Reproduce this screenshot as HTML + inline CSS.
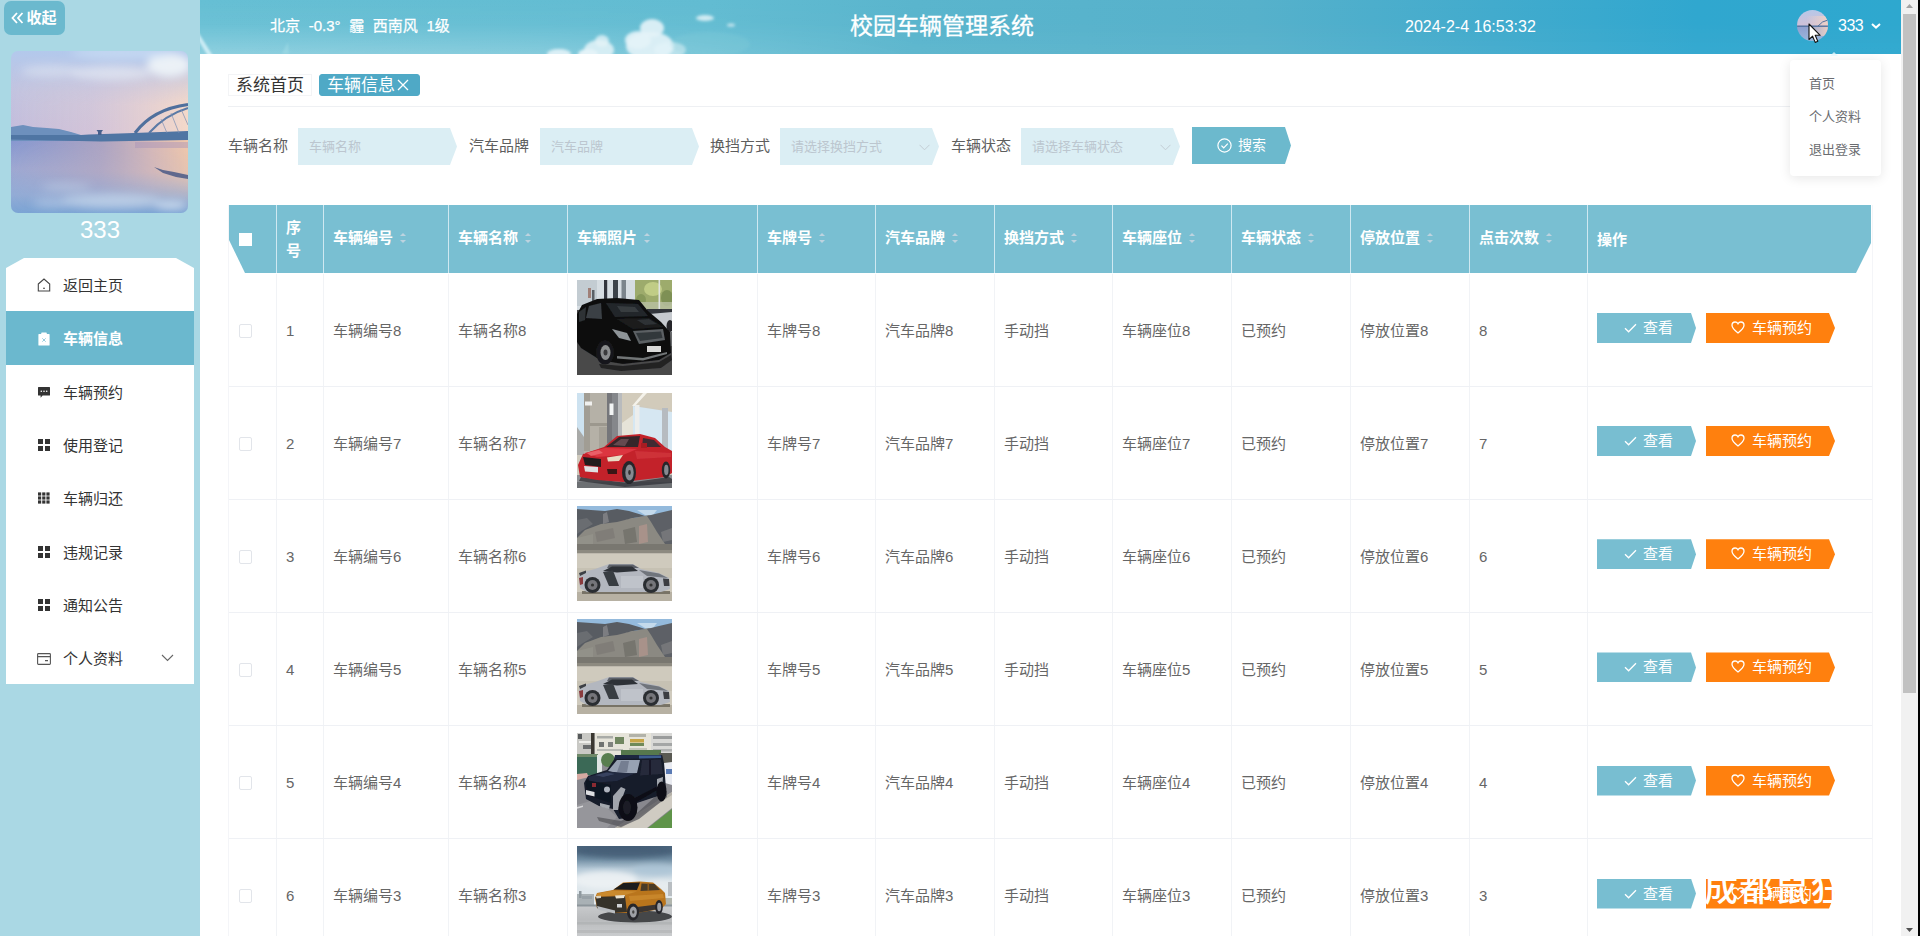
<!DOCTYPE html>
<html lang="zh-CN">
<head>
<meta charset="utf-8">
<title>校园车辆管理系统</title>
<style>
*{box-sizing:border-box;margin:0;padding:0}
html,body{width:1920px;height:936px;overflow:hidden;background:#fff;font-family:"Liberation Sans","Noto Sans CJK SC",sans-serif;color:#606266;font-size:14px}
body{position:relative}
#side{position:absolute;left:0;top:0;width:200px;height:936px;background:#aad8e4}
#collapse{position:absolute;left:4px;top:1px;width:61px;height:34px;border-radius:7px;background:#6bb9ce;color:#fff;font-size:15px;font-weight:bold;line-height:33px;padding-left:7px;white-space:nowrap}
#collapse svg{vertical-align:-1px;margin-right:2.5px}
#avatar{position:absolute;left:11px;top:51px;width:177px;height:162px;border-radius:7px;overflow:hidden}
#uname{position:absolute;left:0;top:214px;width:200px;text-align:center;color:#fff;font-size:24px;line-height:32px}
#menu{position:absolute;left:6px;top:258px;width:188px;height:426px;background:#fff;clip-path:polygon(18px 0,170px 0,188px 10px,188px 100%,0 100%,0 10px)}
#menu .it{position:relative;height:53.33px;line-height:55.5px;padding-left:57px;font-size:15px;color:#333}
#menu .it.on{background:#6bb8ce;color:#fff;font-weight:bold}
#menu .it svg{position:absolute;left:31.5px;top:21px}
#menu .it .arr{position:absolute;left:154.5px;top:22.5px}
#head{position:absolute;left:200px;top:0;width:1701px;height:54px;background:#5ab5cd;overflow:hidden;color:#fff}
#weather{position:absolute;left:70px;top:0;line-height:52px;font-size:15px;white-space:pre;word-spacing:4.5px;-webkit-text-stroke:.25px #fff}
#title{position:absolute;left:650px;top:0;line-height:53px;font-size:23px;white-space:nowrap;-webkit-text-stroke:.3px #fff}
#clock{position:absolute;left:1205px;top:0;line-height:53.5px;font-size:16px;white-space:nowrap}
#user{position:absolute;left:1638px;top:0;line-height:51.5px;font-size:16px;letter-spacing:-0.5px;white-space:nowrap}
#uav{position:absolute;left:1597px;top:10px;width:31px;height:31px;border-radius:50%;overflow:hidden}
#drop{position:absolute;left:1790px;top:60px;width:91px;height:116px;background:#fff;border-radius:4px;box-shadow:0 2px 12px rgba(0,0,0,.1);font-size:13px;color:#6a6c70}
#drop div{position:absolute;left:19px;line-height:20px;white-space:nowrap}
#tabs{position:absolute;left:228px;top:74px;height:22px;white-space:nowrap;font-size:17px;color:#333}
.tab{position:absolute;top:0;height:22px;line-height:22.5px;border:1px solid #f3f4f6;padding:0 7px;white-space:nowrap}
.tab.on{background:#4fa9c6;color:#fff;border-color:#4fa9c6;border-radius:3px}
#hr{position:absolute;left:228px;top:106px;width:1644px;height:1px;background:#eef0f3}
.lab{position:absolute;top:128px;line-height:36.5px;font-size:15px;color:#5e5e5e;white-space:nowrap}
.inp{position:absolute;top:128px;width:159px;height:37px;background:#dbeef4;clip-path:polygon(0 0,152px 0,159px 50%,152px 100%,0 100%);font-size:13px;color:#bcc6cf;line-height:37px;padding-left:11px;white-space:nowrap}
#sbtn{position:absolute;left:1192px;top:127px;width:99px;height:37px;background:#6cb9cd;clip-path:polygon(0 0,93px 0,99px 50%,93px 100%,0 100%);color:#fff;font-size:14px;line-height:36px;padding-left:46px}
#sbtn svg{position:absolute;left:25px;top:11px}
#tbl{position:absolute;left:228px;top:205px;width:1645px;height:731px;font-size:15px;border-left:1px solid #f4f5f8;border-right:1px solid #f4f5f8}
#th{position:absolute;left:0;top:0;width:1642px;height:68px;background:#79bfd2;clip-path:polygon(0 0,100% 0,100% 38px,1627px 100%,16px 100%,0 35px);color:#fff;font-weight:bold}
.hc{position:absolute;top:0;height:68px;line-height:66px;padding-left:9px;border-right:1px solid #cfe8f1;white-space:nowrap}
.hc.nb{border-right:0}
.hc.two{line-height:23px;padding-top:11px}
.hcb{position:absolute;left:10px;top:28px;width:13px;height:13px;background:#fff}
.srt{display:inline-block;position:relative;width:10px;height:20px;vertical-align:middle;margin-left:5px;top:-1px}
.srt:before,.srt:after{content:"";position:absolute;left:2px;border:3px solid transparent}
.srt:before{top:2px;border-bottom-color:#bdd3df}
.srt:after{top:12px;border-top-color:#bdd3df}
.tr{position:absolute;left:0;width:1643px;height:113.12px;border-bottom:1px solid #eff1f5}
.td{position:absolute;top:0;height:100%;line-height:114px;padding-left:9px;border-right:1px solid #f1f3f6;white-space:nowrap;color:#666}
.tr .td:last-child{border-right:0}
.cb{position:absolute;left:10px;top:50px;width:13px;height:14px;border:1px solid #e2e5ea;border-radius:2px;background:#fff}
.pic{position:absolute;left:9px;top:6.6px;width:95px;height:95px;overflow:hidden;background:#777}
.b1,.b2{position:absolute;top:39.5px;height:30px;line-height:29px;color:#fff;font-size:15px;white-space:nowrap}
.b1{left:9px;width:99px;background:#78bed1;clip-path:polygon(0 0,94px 0,99px 50%,94px 100%,0 100%);padding-left:46px}
.b2{left:118px;width:129px;background:#ff800e;clip-path:polygon(0 0,123px 0,129px 50%,123px 100%,0 100%);padding-left:46px}
.b1 svg{position:absolute;left:27px;top:10px}
.b2 svg{position:absolute;left:25px;top:8px}
#wm{position:absolute;left:1704px;top:867px;width:136px;overflow:hidden;font-size:34px;font-weight:500;line-height:44px;color:#fff;white-space:nowrap;letter-spacing:1.5px}
#blk{position:absolute;left:1918px;top:0;width:2px;height:936px;background:#000}
#sb{position:absolute;left:1901px;top:0;width:17px;height:936px;background:#f1f1f1}
#sb i{position:absolute;left:2px;top:14px;width:13px;height:679px;background:#c1c1c1}
</style>
</head>
<body>
<div id="side">
  <div id="collapse"><svg width="13" height="12" viewBox="0 0 13 12" fill="none" stroke="#fff" stroke-width="1.8"><path d="M6 1 L1.5 6 L6 11 M11.5 1 L7 6 L11.5 11"/></svg>收起</div>
  <div id="avatar"><!--AVATAR--><svg width="177" height="162" viewBox="0 0 177 162" preserveAspectRatio="none">
<defs>
<linearGradient id="a_avs" x1="0" y1="0" x2="0" y2="1"><stop offset="0" stop-color="#b3c9ec"/><stop offset=".45" stop-color="#c3c4e0"/><stop offset="1" stop-color="#c4bbdc"/></linearGradient>
<linearGradient id="a_avr" x1="0" y1="0" x2="1" y2="0"><stop offset="0" stop-color="#f4d6c6" stop-opacity="0"/><stop offset=".45" stop-color="#ecd0d2" stop-opacity=".35"/><stop offset="1" stop-color="#f6dac8" stop-opacity=".95"/></linearGradient>
<linearGradient id="a_avw" x1="0" y1="0" x2="0" y2="1"><stop offset="0" stop-color="#8597d0"/><stop offset=".4" stop-color="#9ea8d2"/><stop offset=".75" stop-color="#93acd6"/><stop offset="1" stop-color="#7ba4d4"/></linearGradient>
<linearGradient id="a_avwr" x1="0" y1="0" x2="1" y2="0"><stop offset="0" stop-color="#b8a8c0" stop-opacity="0"/><stop offset=".5" stop-color="#bba8bc" stop-opacity=".7"/><stop offset=".8" stop-color="#e0bcb4" stop-opacity=".9"/><stop offset="1" stop-color="#f2c8aa" stop-opacity="1"/></linearGradient>
<linearGradient id="a_avfade" x1="0" y1="0" x2="0" y2="1"><stop offset="0" stop-color="#fff" stop-opacity="1"/><stop offset=".45" stop-color="#fff" stop-opacity=".85"/><stop offset=".85" stop-color="#fff" stop-opacity=".12"/><stop offset="1" stop-color="#fff" stop-opacity="0"/></linearGradient>
<mask id="a_avm"><rect x="0" y="88" width="177" height="74" fill="url(#a_avfade)"/></mask>
<linearGradient id="a_avfade2" x1="0" y1="0" x2="0" y2="1"><stop offset="0" stop-color="#fff" stop-opacity="0"/><stop offset=".1" stop-color="#fff" stop-opacity="0"/><stop offset=".6" stop-color="#fff" stop-opacity="1"/><stop offset="1" stop-color="#fff" stop-opacity="1"/></linearGradient>
<mask id="a_avm2"><rect x="0" y="0" width="177" height="90" fill="url(#a_avfade2)"/></mask>
<filter id="a_avb" x="-20%" y="-20%" width="140%" height="140%"><feGaussianBlur stdDeviation="4"/></filter>
<filter id="a_avb2" x="-20%" y="-20%" width="140%" height="140%"><feGaussianBlur stdDeviation="0.6"/></filter>
</defs>
<rect width="177" height="90" fill="url(#a_avs)"/>
<rect y="0" width="177" height="90" fill="url(#a_avr)" mask="url(#a_avm2)"/>
<g filter="url(#a_avb)" fill="#eef3f8"><ellipse cx="158" cy="14" rx="22" ry="12" opacity=".95"/><ellipse cx="100" cy="22" rx="40" ry="7" opacity=".55"/><ellipse cx="40" cy="20" rx="30" ry="6" opacity=".4"/><ellipse cx="110" cy="2" rx="50" ry="6" fill="#c8dcf4" opacity=".8"/></g>
<rect y="88" width="177" height="74" fill="url(#a_avw)"/>
<rect y="88" width="177" height="74" fill="url(#a_avwr)" mask="url(#a_avm)"/>
<g filter="url(#a_avb)" fill="#d4e2f2"><ellipse cx="100" cy="150" rx="50" ry="7" opacity=".6"/><ellipse cx="160" cy="154" rx="16" ry="4" opacity=".9"/><ellipse cx="55" cy="136" rx="25" ry="4" opacity=".35"/><ellipse cx="40" cy="152" rx="18" ry="4" opacity=".4"/></g>
<g filter="url(#a_avb2)">
<path d="M0 76 L12 74 L22 76 L36 77 L48 78 L60 81 L70 84 L70 90 L0 90 Z" fill="#6d90bd"/>
<path d="M0 84 L70 84 L78 83.5 L123 82 L177 80 L177 89 L90 90.5 L0 88.5 Z" fill="#4f74a3"/>
<path d="M85.5 79 H92 L90.5 81 V84 H87 V81 Z" fill="#46618d"/>
<path d="M124 82 Q142 58 177 53.5" fill="none" stroke="#4f6f9d" stroke-width="3.2"/>
<path d="M138 82 Q154 64 177 57" fill="none" stroke="#5b7aa6" stroke-width="2"/>
<path d="M150 68 L156 82 M160 62 L168 82 M170 58 L177 74" stroke="#7d8fb4" stroke-width=".7" fill="none"/>
<path d="M143 116 L152 119 L163 121 L177 124 L177 128 L165 126 L152 122 Z" fill="#4a5a86" opacity=".85"/>
<rect x="124" y="91" width="53" height="6" fill="#a793b8" opacity=".45"/>
</g>
</svg><!--/AVATAR--></div>
  <div id="uname">333</div>
  <div id="menu">
    <div class="it"><svg width="14" height="14" viewBox="0 0 14 14" fill="none" stroke="#444" stroke-width="1.1" style="left:30.5px;top:20px"><path d="M1.3 6 L7 1 L12.7 6 V13 H1.3 Z"/><path d="M6 10.3 H8"/></svg>返回主页</div>
    <div class="it on"><svg width="12" height="14" viewBox="0 0 12 14" style="left:31.5px;top:20.5px"><path fill="#fff" d="M1 2 H3.2 V1.2 Q3.2 0.5 3.9 0.5 H8.1 Q8.8 0.5 8.8 1.2 V2 H11 Q11.6 2 11.6 2.6 V13 Q11.6 13.6 11 13.6 H1 Q0.4 13.6 0.4 13 V2.6 Q0.4 2 1 2 Z"/><path d="M4.3 6.3 L7.7 9.7 M7.7 6.3 L4.3 9.7" stroke="#8cc6d7" stroke-width="0.9" fill="none"/></svg>车辆信息</div>
    <div class="it"><svg width="12" height="11" viewBox="0 0 12 11" style="left:31.5px;top:22px"><path fill="#333" d="M0.6 0 H11.4 Q12 0 12 0.6 V8 Q12 8.6 11.4 8.6 H4.6 L2.6 10.8 V8.6 H0.6 Q0 8.6 0 8 V0.6 Q0 0 0.6 0 Z"/><circle cx="3.3" cy="4.2" r="0.8" fill="#fff"/><circle cx="6" cy="4.2" r="0.8" fill="#fff"/><circle cx="8.7" cy="4.2" r="0.8" fill="#fff"/></svg>车辆预约</div>
    <div class="it"><svg width="12" height="12" viewBox="0 0 12 12" fill="#333"><rect x="0" y="0" width="5" height="5"/><rect x="7" y="0" width="5" height="5"/><rect x="0" y="7" width="5" height="5"/><rect x="7" y="7" width="5" height="5"/></svg>使用登记</div>
    <div class="it"><svg width="12" height="12" viewBox="0 0 12 12" fill="#333"><rect x="0" y="0.4" width="3.2" height="3.2"/><rect x="0" y="4.4" width="3.2" height="3.2"/><rect x="0" y="8.4" width="3.2" height="3.2"/><rect x="4.2" y="0.4" width="3.2" height="3.2"/><rect x="4.2" y="4.4" width="3.2" height="3.2"/><rect x="4.2" y="8.4" width="3.2" height="3.2"/><rect x="8.4" y="0.4" width="3.2" height="3.2"/><rect x="8.4" y="4.4" width="3.2" height="3.2"/><rect x="8.4" y="8.4" width="3.2" height="3.2"/></svg>车辆归还</div>
    <div class="it"><svg width="12" height="12" viewBox="0 0 12 12" fill="#333"><rect x="0" y="0" width="5" height="5"/><rect x="7" y="0" width="5" height="5"/><rect x="0" y="7" width="5" height="5"/><rect x="7" y="7" width="5" height="5"/></svg>违规记录</div>
    <div class="it"><svg width="12" height="12" viewBox="0 0 12 12" fill="#333"><rect x="0" y="0" width="5" height="5"/><rect x="7" y="0" width="5" height="5"/><rect x="0" y="7" width="5" height="5"/><rect x="7" y="7" width="5" height="5"/></svg>通知公告</div>
    <div class="it"><svg width="14" height="12" viewBox="0 0 14 12" fill="none" stroke="#555" stroke-width="1.1" style="left:30.5px;top:21.5px"><rect x="0.6" y="0.6" width="12.8" height="10.8" rx="0.8"/><path d="M0.6 3.6 H13.4 M8 7.6 H11"/></svg>个人资料<svg class="arr" width="13" height="8" viewBox="0 0 13 8" fill="none" stroke="#666" stroke-width="1.1"><path d="M1 1 L6.5 6.5 L12 1"/></svg></div>
  </div>
</div>
<div id="head">
<svg id="hbg" width="1701" height="54" viewBox="0 0 1701 54" preserveAspectRatio="none" style="position:absolute;left:0;top:0">
<defs>
<linearGradient id="hg" x1="0" y1="0" x2="1" y2="0"><stop offset="0" stop-color="#66bfd4"/><stop offset=".3" stop-color="#62bcd2"/><stop offset=".42" stop-color="#5ab5cd"/><stop offset=".62" stop-color="#56b1cb"/><stop offset=".76" stop-color="#42abcd"/><stop offset=".88" stop-color="#30a7cf"/><stop offset="1" stop-color="#2ea8cf"/></linearGradient>
<linearGradient id="hv" x1="0" y1="0" x2="0" y2="1"><stop offset="0" stop-color="#fff" stop-opacity="0"/><stop offset=".45" stop-color="#fff" stop-opacity=".04"/><stop offset="1" stop-color="#fff" stop-opacity=".26"/></linearGradient>
<linearGradient id="hvm" x1="0" y1="0" x2="1" y2="0"><stop offset="0" stop-color="#fff" stop-opacity="1"/><stop offset=".2" stop-color="#fff" stop-opacity=".85"/><stop offset=".32" stop-color="#fff" stop-opacity=".4"/><stop offset=".42" stop-color="#fff" stop-opacity=".14"/><stop offset="1" stop-color="#fff" stop-opacity=".12"/></linearGradient>
<mask id="hmask"><rect width="1701" height="54" fill="url(#hvm)"/></mask>
<filter id="hb" x="-10%" y="-30%" width="120%" height="160%"><feGaussianBlur stdDeviation="1.6"/></filter>
<filter id="hb2" x="-10%" y="-30%" width="120%" height="160%"><feGaussianBlur stdDeviation="0.8"/></filter>
</defs>
<rect width="1701" height="54" fill="url(#hg)"/>
<rect width="1701" height="54" fill="url(#hv)" mask="url(#hmask)"/>
<g filter="url(#hb2)"><path d="M-2 32 L13 56 L8 56 L-2 40 Z" fill="#d6f1f8" opacity=".85"/><path d="M82 54 L88 42 L89 54 Z" fill="#a6dde8" opacity=".5"/></g>
<g filter="url(#hb)" fill="#e4f3f8">
<ellipse cx="359" cy="54" rx="12" ry="5" opacity=".9"/>
<ellipse cx="399" cy="50" rx="15" ry="10" opacity=".85"/><ellipse cx="402" cy="41" rx="7" ry="6" opacity=".8"/><ellipse cx="388" cy="54" rx="10" ry="5"/>
<ellipse cx="450" cy="46" rx="24" ry="14" opacity=".9"/><ellipse cx="452" cy="28" rx="12" ry="9" opacity=".9"/><ellipse cx="438" cy="40" rx="13" ry="9" opacity=".9"/><ellipse cx="470" cy="50" rx="16" ry="8" opacity=".6"/>
<ellipse cx="505" cy="18" rx="9" ry="3" opacity=".85"/><ellipse cx="531" cy="25" rx="4" ry="1.6" opacity=".8"/>
</g>
<g filter="url(#hb)"><ellipse cx="510" cy="44" rx="40" ry="12" fill="#8fd0de" opacity=".2"/></g>
</svg>
  <div id="weather">北京 -0.3° 霾 西南风 1级</div>
  <div id="title">校园车辆管理系统</div>
  <div id="clock">2024-2-4 16:53:32</div>
  <div id="uav"><svg width="31" height="31" viewBox="0 0 31 31"><defs><linearGradient id="u1" x1="0" y1="0" x2="0" y2="1"><stop offset="0" stop-color="#b7c8e8"/><stop offset=".5" stop-color="#cfc0d8"/><stop offset=".56" stop-color="#8fa0d0"/><stop offset="1" stop-color="#9ab6dc"/></linearGradient><linearGradient id="u2" x1="0" y1="0" x2="1" y2="0"><stop offset=".3" stop-color="#f2d2c4" stop-opacity="0"/><stop offset="1" stop-color="#f2d2c4" stop-opacity=".9"/></linearGradient></defs><rect width="31" height="31" fill="url(#u1)"/><rect y="6" width="31" height="20" fill="url(#u2)"/><rect y="15.5" width="31" height="1.4" fill="#52719f"/><path d="M21 16 Q25 11 31 10" stroke="#52719f" stroke-width="1" fill="none"/></svg></div>
  <div id="user">333<svg width="10" height="7" viewBox="0 0 10 7" style="position:absolute;left:32.5px;top:22.5px" fill="none" stroke="#fff" stroke-width="2"><path d="M1 1 L5 4.6 L9 1"/></svg></div>
</div>
<div id="tabs"><div class="tab" style="left:0">系统首页</div><div class="tab on" style="left:91px;width:101px">车辆信息<svg width="12" height="12" viewBox="0 0 12 12" style="position:absolute;left:77px;top:4px" stroke="#fff" stroke-width="1.3" fill="none"><path d="M1 1 L11 11 M11 1 L1 11"/></svg></div></div>
<div id="hr"></div>
<div class="lab" style="left:228px">车辆名称</div><div class="inp" style="left:298px">车辆名称</div>
<div class="lab" style="left:469px">汽车品牌</div><div class="inp" style="left:540px">汽车品牌</div>
<div class="lab" style="left:710px">换挡方式</div><div class="inp" style="left:780px">请选择换挡方式<svg width="11" height="7" viewBox="0 0 11 7" style="position:absolute;left:139px;top:16px" fill="none" stroke="#c3cdd4" stroke-width="1"><path d="M0.5 0.8 L5.5 5.8 L10.5 0.8"/></svg></div>
<div class="lab" style="left:951px">车辆状态</div><div class="inp" style="left:1021px">请选择车辆状态<svg width="11" height="7" viewBox="0 0 11 7" style="position:absolute;left:139px;top:16px" fill="none" stroke="#c3cdd4" stroke-width="1"><path d="M0.5 0.8 L5.5 5.8 L10.5 0.8"/></svg></div>
<div id="sbtn"><svg width="15" height="15" viewBox="0 0 15 15" fill="none" stroke="#fff" stroke-width="1.2"><circle cx="7.5" cy="7.5" r="6.6"/><path d="M4.4 7.6 L6.7 9.8 L10.8 5.6"/></svg>搜索</div>
<!--TB0-->
<div id="tbl">
<div id="th">
<div class="hc" style="left:0px;width:48px"><b class="hcb"></b></div>
<div class="hc two" style="left:48px;width:47px">序<br>号</div>
<div class="hc" style="left:95px;width:125px">车辆编号<span class="srt"></span></div>
<div class="hc" style="left:220px;width:119px">车辆名称<span class="srt"></span></div>
<div class="hc" style="left:339px;width:190px">车辆照片<span class="srt"></span></div>
<div class="hc" style="left:529px;width:118px">车牌号<span class="srt"></span></div>
<div class="hc" style="left:647px;width:119px">汽车品牌<span class="srt"></span></div>
<div class="hc" style="left:766px;width:118px">换挡方式<span class="srt"></span></div>
<div class="hc" style="left:884px;width:119px">车辆座位<span class="srt"></span></div>
<div class="hc" style="left:1003px;width:119px">车辆状态<span class="srt"></span></div>
<div class="hc" style="left:1122px;width:119px">停放位置<span class="srt"></span></div>
<div class="hc" style="left:1241px;width:118px">点击次数<span class="srt"></span></div>
<div class="hc nb" style="left:1359px;width:284px;padding-top:2px">操作</div>
</div>
<div class="tr" style="top:68.5px">
<div class="td" style="left:0px;width:48px"><i class="cb"></i></div>
<div class="td" style="left:48px;width:47px">1</div>
<div class="td" style="left:95px;width:125px">车辆编号8</div>
<div class="td" style="left:220px;width:119px">车辆名称8</div>
<div class="td" style="left:339px;width:190px"><div class="pic"><!--CAR1--><svg width="95" height="95" viewBox="0 0 95 95"><defs><filter id="c1_cb" x="-10%" y="-10%" width="120%" height="120%"><feGaussianBlur stdDeviation="0.7"/></filter><filter id="c1_cb3" x="-20%" y="-20%" width="140%" height="140%"><feGaussianBlur stdDeviation="2.5"/></filter></defs>
<rect width="95" height="95" fill="#444446"/>
<g filter="url(#c1_cb)">
<rect width="62" height="30" fill="#d6dde2"/>
<rect x="0" y="0" width="20" height="26" fill="#c3ccd2"/>
<rect x="58" y="0" width="37" height="31" fill="#9dab6c"/>
<ellipse cx="76" cy="9" rx="9" ry="7" fill="#c0cc86"/><ellipse cx="90" cy="18" rx="6" ry="8" fill="#7e9054"/><ellipse cx="64" cy="20" rx="5" ry="6" fill="#86985a"/>
<rect x="57" y="22" width="38" height="8" fill="#b9c0a4" opacity=".8"/>
<rect x="11" y="8" width="3" height="10" fill="#a08078"/>
<rect x="15" y="10" width="2.5" height="12" fill="#5a6066"/>
<rect x="27" y="0" width="3.2" height="21" fill="#30363c"/><rect x="36" y="0" width="5" height="21" fill="#3b4248"/><rect x="44.5" y="0" width="4.5" height="21" fill="#7c858c"/>
<rect x="81.5" y="0" width="1.6" height="36" fill="#dfe3e2"/>
<rect x="70" y="29" width="25" height="6" fill="#30353a"/>
<path d="M72 34 L95 32 L95 54 L86 50 L76 42 Z" fill="#c6cacf"/>
<ellipse cx="93" cy="46" rx="3.5" ry="6" fill="#26282b"/>
<rect y="64" width="95" height="31" fill="#48484a"/>
<rect x="88" y="52" width="7" height="14" fill="#6a6c6e"/>
<path d="M0 34 L5 25 L20 19 L40 18 L62 20 L71 31 L84 42 L93 52 L94 73 L82 80 L46 84 L34 82 L20 78 L4 68 L0 62 Z" fill="#0f1011"/>
<path d="M29 23 L61 24 L71 36 L38 37 Z" fill="#23272b"/>
<path d="M40 26 L58 27 L62 32 L44 32 Z" fill="#3c4247" opacity=".8"/>
<path d="M12 26 L24 23 L25 39 L9 38 Z" fill="#4a5055" opacity=".75"/>
<path d="M2 32 L9 27 L8 40 L2 42 Z" fill="#3a3f44" opacity=".7"/>
<path d="M40 39 L72 38 L86 47 L56 49 Z" fill="#1b1d1f"/>
<path d="M60 40 L72 39 L80 44 L68 45 Z" fill="#34383c" opacity=".8"/>
<path d="M56 51 L86 49 L88 60 L62 64 Z" fill="#5b6064"/>
<path d="M59 53 L84 51.5 L85.5 58 L63 61 Z" fill="#33373a"/>
<path d="M35 49 L50 53 L54 61 L42 58 Z" fill="#8e9498"/>
<rect x="70" y="66" width="14" height="6" fill="#d9d9d7"/>
<path d="M40 76 L66 78 L90 72 L90 74 L66 80.5 L40 78.5 Z" fill="#8a8d90" opacity=".8"/>
<ellipse cx="28" cy="72.5" rx="9" ry="12" fill="#17181a"/><ellipse cx="28.5" cy="72.5" rx="5" ry="7.5" fill="#8c8e90"/><ellipse cx="28.5" cy="72.5" rx="2" ry="3" fill="#3a3b3d"/>
<path d="M22 84 L46 86 L82 82 L94 75 L95 80 L84 88 L44 91 L24 88 Z" fill="#232324"/>
</g></svg><!--/CAR1--></div></div>
<div class="td" style="left:529px;width:118px">车牌号8</div>
<div class="td" style="left:647px;width:119px">汽车品牌8</div>
<div class="td" style="left:766px;width:118px">手动挡</div>
<div class="td" style="left:884px;width:119px">车辆座位8</div>
<div class="td" style="left:1003px;width:119px">已预约</div>
<div class="td" style="left:1122px;width:119px">停放位置8</div>
<div class="td" style="left:1241px;width:118px">8</div>
<div class="td" style="left:1359px;width:284px"><div class="b1"><svg width="13" height="10" viewBox="0 0 13 10" fill="none" stroke="#fff" stroke-width="1.3"><path d="M1 5.2 L4.6 8.8 L12 1.2"/></svg>查看</div><div class="b2"><svg width="14" height="13" viewBox="0 0 14 13" fill="none" stroke="#fff" stroke-width="1.3"><path d="M7 12 C3 9 1 6.8 1 4.3 C1 2.3 2.5 1 4.1 1 C5.3 1 6.4 1.7 7 2.8 C7.6 1.7 8.7 1 9.9 1 C11.5 1 13 2.3 13 4.3 C13 6.8 11 9 7 12 Z"/></svg>车辆预约</div></div>
</div>
<div class="tr" style="top:181.6px">
<div class="td" style="left:0px;width:48px"><i class="cb"></i></div>
<div class="td" style="left:48px;width:47px">2</div>
<div class="td" style="left:95px;width:125px">车辆编号7</div>
<div class="td" style="left:220px;width:119px">车辆名称7</div>
<div class="td" style="left:339px;width:190px"><div class="pic"><!--CAR2--><svg width="95" height="95" viewBox="0 0 95 95"><defs><filter id="c2_cb" x="-10%" y="-10%" width="120%" height="120%"><feGaussianBlur stdDeviation="0.7"/></filter><filter id="c2_cb3" x="-20%" y="-20%" width="140%" height="140%"><feGaussianBlur stdDeviation="2.5"/></filter></defs>
<rect width="95" height="95" fill="#cfcabd"/>
<g filter="url(#c2_cb)">
<rect x="0" y="0" width="8" height="62" fill="#cde2f0"/>
<path d="M0 34 L7 44 L7 62 L0 62 Z" fill="#a9aaa8"/>
<rect x="7" y="0" width="24" height="60" fill="#b5b1a7"/>
<rect x="7" y="0" width="6" height="58" fill="#a19d94"/>
<rect x="13" y="30" width="18" height="3" fill="#9c988e"/>
<rect x="22" y="34" width="8" height="22" fill="#a6a298"/>
<rect x="8" y="8.5" width="7" height="4" fill="#f0f0ee"/>
<rect x="30" y="0" width="14" height="52" fill="#85878b"/>
<rect x="30" y="0" width="5" height="50" fill="#74767a"/>
<rect x="32.5" y="10.5" width="4" height="11.5" fill="#f2f4f4"/>
<rect x="41" y="0" width="4" height="44" fill="#b9bbbd"/>
<path d="M45 0 L95 0 L95 18 L60 12 L52 36 L45 40 Z" fill="#d2cbbb"/>
<path d="M56 13 L95 19 L95 60 L56 46 Z" fill="#d6e7f2"/>
<path d="M66 0 L70 0 L58 13 L55 13 Z" fill="#f4f2ea"/>
<path d="M45 30 L56 22 L56 44 L45 44 Z" fill="#e6e3d8"/>
<rect x="58" y="12" width="4.5" height="32" fill="#eceeed"/>
<rect x="85" y="15" width="6" height="42" fill="#b6bbc0"/>
<rect y="82" width="95" height="13" fill="#8b8d91"/>
<rect y="89" width="95" height="6" fill="#6d6f73"/>
<path d="M4 84 L50 90 L92 84 L95 86 L95 90 L48 94 L2 88 Z" fill="#3a3b3f" opacity=".85"/>
<path d="M1 72 L6 61 L27 54 L40 43 L63 41 L78 45 L88 54 L95 58 L95 80 L88 84 L46 89 L20 87 L3 84 Z" fill="#c3222c"/>
<path d="M29 54 L42 44 L63 43 L61 54 Z" fill="#35262b"/>
<path d="M36 52 L44 46 L52 46 L48 53 Z" fill="#7a5a60" opacity=".7"/>
<path d="M66 45 L77 47 L84 54 L65 54 Z" fill="#3f2a30"/>
<path d="M64 50 L70 50 L70 55 L64 55 Z" fill="#a81a24"/>
<path d="M8 60 L28 55 L60 56 L46 62 L20 64 Z" fill="#dc3640"/>
<path d="M10 60 L22 57 L26 60 L14 63 Z" fill="#ee6a70" opacity=".8"/>
<path d="M6 64 L24 66 L24 74 L8 72 Z" fill="#241a1e"/>
<path d="M7 73 L21 74 L21 79.5 L8 78.5 Z" fill="#dfe1e2"/>
<path d="M30 64.5 L46 62 L42 68 L31 68.5 Z" fill="#e8dcc4"/>
<path d="M30 76 L40 76 L40 81 L31 81 Z" fill="#3a1418"/>
<path d="M58 58 L94 60 L94 64 L60 66 Z" fill="#d63a42" opacity=".6"/>
<ellipse cx="52" cy="79.5" rx="7" ry="11.5" fill="#26262a"/><ellipse cx="52.5" cy="79.5" rx="4.2" ry="8" fill="#878990"/><ellipse cx="52.5" cy="79.5" rx="1.3" ry="2.4" fill="#333"/>
<ellipse cx="89" cy="77" rx="4.2" ry="8.5" fill="#26262a"/><ellipse cx="89.3" cy="77" rx="2.2" ry="5.2" fill="#878990"/>
</g></svg><!--/CAR2--></div></div>
<div class="td" style="left:529px;width:118px">车牌号7</div>
<div class="td" style="left:647px;width:119px">汽车品牌7</div>
<div class="td" style="left:766px;width:118px">手动挡</div>
<div class="td" style="left:884px;width:119px">车辆座位7</div>
<div class="td" style="left:1003px;width:119px">已预约</div>
<div class="td" style="left:1122px;width:119px">停放位置7</div>
<div class="td" style="left:1241px;width:118px">7</div>
<div class="td" style="left:1359px;width:284px"><div class="b1"><svg width="13" height="10" viewBox="0 0 13 10" fill="none" stroke="#fff" stroke-width="1.3"><path d="M1 5.2 L4.6 8.8 L12 1.2"/></svg>查看</div><div class="b2"><svg width="14" height="13" viewBox="0 0 14 13" fill="none" stroke="#fff" stroke-width="1.3"><path d="M7 12 C3 9 1 6.8 1 4.3 C1 2.3 2.5 1 4.1 1 C5.3 1 6.4 1.7 7 2.8 C7.6 1.7 8.7 1 9.9 1 C11.5 1 13 2.3 13 4.3 C13 6.8 11 9 7 12 Z"/></svg>车辆预约</div></div>
</div>
<div class="tr" style="top:294.7px">
<div class="td" style="left:0px;width:48px"><i class="cb"></i></div>
<div class="td" style="left:48px;width:47px">3</div>
<div class="td" style="left:95px;width:125px">车辆编号6</div>
<div class="td" style="left:220px;width:119px">车辆名称6</div>
<div class="td" style="left:339px;width:190px"><div class="pic"><!--CAR3--><svg width="95" height="95" viewBox="0 0 95 95"><defs><filter id="c3_cb" x="-10%" y="-10%" width="120%" height="120%"><feGaussianBlur stdDeviation="0.7"/></filter><filter id="c3_cb3" x="-20%" y="-20%" width="140%" height="140%"><feGaussianBlur stdDeviation="2.5"/></filter></defs>
<rect width="95" height="95" fill="#cec9bc"/>
<g filter="url(#c3_cb)">
<rect width="95" height="12" fill="#94badc"/>
<path d="M60 4 L80 4 L76 9 L68 9 Z" fill="#c4daec"/>
<path d="M0 24 L10 20 L25 17 L45 14 L62 11 L72 9 L80 12 L95 18 L95 42 L0 42 Z" fill="#8b8982"/>
<path d="M0 3 L14 4 L28 5 L40 3 L52 5 L62 8 L68 10 L56 12 L40 16 L24 18 L8 24 L0 32 Z" fill="#585c62"/>
<path d="M26 8 L30 6 L32 16 L26 18 Z" fill="#8a8c8e" opacity=".7"/>
<path d="M0 14 L10 12 L16 18 L6 24 L0 28 Z" fill="#6f7276" opacity=".8"/>
<path d="M70 10 L82 7 L95 4 L95 40 L88 38 L80 26 L74 16 Z" fill="#5d6166"/>
<path d="M84 26 L95 22 L95 34 L86 36 Z" fill="#7a7c7e" opacity=".8"/>
<path d="M62 20 L70 18 L71 36 L62 38 Z" fill="#a8928a"/>
<path d="M46 24 L58 21 L60 36 L48 38 Z" fill="#76746e"/>
<path d="M18 26 L36 22 L38 32 L20 36 Z" fill="#7d7b75" opacity=".8"/>
<path d="M0 32 L16 28 L16 40 L0 40 Z" fill="#96948c" opacity=".7"/>
<rect y="38" width="95" height="9" fill="#79776f"/>
<rect y="44" width="95" height="3.5" fill="#8d8a80"/>
<rect y="47.5" width="95" height="48" fill="#cfcabd"/>
<rect y="62" width="95" height="10" fill="#c6c1b3"/>
<rect y="86" width="95" height="9" fill="#b7b1a3"/>
<rect x="5" y="85" width="88" height="3" fill="#6d685c" opacity=".85"/>
<path d="M2 72 L3 67 L18 63 L32 58 L56 58 L64 63 L82 67 L92 72 L93 83 L84 86 L10 86 L3 82 Z" fill="#b3b7bf"/>
<path d="M32 58.5 L56 58.5 L62 62 L30 62 Z" fill="#5c6068"/>
<path d="M26 65 L35 60.5 L55 60.5 L61 65 L40 66.5 Z" fill="#2e3238"/>
<path d="M26 66 L36 64.5 L42 80 L32 80 Z" fill="#383c43"/>
<path d="M62 64 L82 67.5 L91 72 L70 70 Z" fill="#70747c"/>
<path d="M86 72.5 L92 73 L92.5 80 L87 80 Z" fill="#3a3d42"/>
<path d="M2 67 L9 64.5 L9 67 L3 70 Z" fill="#3c3f45"/>
<path d="M2 72 L6 71 L6 78 L3 79 Z" fill="#8a3a3c"/>
<path d="M44 70 L66 70 L66 82 L44 82 Z" fill="#c4c8cf" opacity=".7"/>
<circle cx="15.5" cy="79" r="8" fill="#2c2d31"/><circle cx="15.5" cy="79" r="5" fill="#74757a"/><circle cx="15.5" cy="79" r="1.6" fill="#333"/>
<circle cx="74" cy="79" r="8" fill="#2c2d31"/><circle cx="74" cy="79" r="5" fill="#74757a"/><circle cx="74" cy="79" r="1.6" fill="#333"/>
</g></svg><!--/CAR3--></div></div>
<div class="td" style="left:529px;width:118px">车牌号6</div>
<div class="td" style="left:647px;width:119px">汽车品牌6</div>
<div class="td" style="left:766px;width:118px">手动挡</div>
<div class="td" style="left:884px;width:119px">车辆座位6</div>
<div class="td" style="left:1003px;width:119px">已预约</div>
<div class="td" style="left:1122px;width:119px">停放位置6</div>
<div class="td" style="left:1241px;width:118px">6</div>
<div class="td" style="left:1359px;width:284px"><div class="b1"><svg width="13" height="10" viewBox="0 0 13 10" fill="none" stroke="#fff" stroke-width="1.3"><path d="M1 5.2 L4.6 8.8 L12 1.2"/></svg>查看</div><div class="b2"><svg width="14" height="13" viewBox="0 0 14 13" fill="none" stroke="#fff" stroke-width="1.3"><path d="M7 12 C3 9 1 6.8 1 4.3 C1 2.3 2.5 1 4.1 1 C5.3 1 6.4 1.7 7 2.8 C7.6 1.7 8.7 1 9.9 1 C11.5 1 13 2.3 13 4.3 C13 6.8 11 9 7 12 Z"/></svg>车辆预约</div></div>
</div>
<div class="tr" style="top:407.9px">
<div class="td" style="left:0px;width:48px"><i class="cb"></i></div>
<div class="td" style="left:48px;width:47px">4</div>
<div class="td" style="left:95px;width:125px">车辆编号5</div>
<div class="td" style="left:220px;width:119px">车辆名称5</div>
<div class="td" style="left:339px;width:190px"><div class="pic"><!--CAR4--><svg width="95" height="95" viewBox="0 0 95 95"><defs><filter id="c4_cb" x="-10%" y="-10%" width="120%" height="120%"><feGaussianBlur stdDeviation="0.7"/></filter><filter id="c4_cb3" x="-20%" y="-20%" width="140%" height="140%"><feGaussianBlur stdDeviation="2.5"/></filter></defs>
<rect width="95" height="95" fill="#cec9bc"/>
<g filter="url(#c4_cb)">
<rect width="95" height="12" fill="#94badc"/>
<path d="M60 4 L80 4 L76 9 L68 9 Z" fill="#c4daec"/>
<path d="M0 24 L10 20 L25 17 L45 14 L62 11 L72 9 L80 12 L95 18 L95 42 L0 42 Z" fill="#8b8982"/>
<path d="M0 3 L14 4 L28 5 L40 3 L52 5 L62 8 L68 10 L56 12 L40 16 L24 18 L8 24 L0 32 Z" fill="#585c62"/>
<path d="M26 8 L30 6 L32 16 L26 18 Z" fill="#8a8c8e" opacity=".7"/>
<path d="M0 14 L10 12 L16 18 L6 24 L0 28 Z" fill="#6f7276" opacity=".8"/>
<path d="M70 10 L82 7 L95 4 L95 40 L88 38 L80 26 L74 16 Z" fill="#5d6166"/>
<path d="M84 26 L95 22 L95 34 L86 36 Z" fill="#7a7c7e" opacity=".8"/>
<path d="M62 20 L70 18 L71 36 L62 38 Z" fill="#a8928a"/>
<path d="M46 24 L58 21 L60 36 L48 38 Z" fill="#76746e"/>
<path d="M18 26 L36 22 L38 32 L20 36 Z" fill="#7d7b75" opacity=".8"/>
<path d="M0 32 L16 28 L16 40 L0 40 Z" fill="#96948c" opacity=".7"/>
<rect y="38" width="95" height="9" fill="#79776f"/>
<rect y="44" width="95" height="3.5" fill="#8d8a80"/>
<rect y="47.5" width="95" height="48" fill="#cfcabd"/>
<rect y="62" width="95" height="10" fill="#c6c1b3"/>
<rect y="86" width="95" height="9" fill="#b7b1a3"/>
<rect x="5" y="85" width="88" height="3" fill="#6d685c" opacity=".85"/>
<path d="M2 72 L3 67 L18 63 L32 58 L56 58 L64 63 L82 67 L92 72 L93 83 L84 86 L10 86 L3 82 Z" fill="#b3b7bf"/>
<path d="M32 58.5 L56 58.5 L62 62 L30 62 Z" fill="#5c6068"/>
<path d="M26 65 L35 60.5 L55 60.5 L61 65 L40 66.5 Z" fill="#2e3238"/>
<path d="M26 66 L36 64.5 L42 80 L32 80 Z" fill="#383c43"/>
<path d="M62 64 L82 67.5 L91 72 L70 70 Z" fill="#70747c"/>
<path d="M86 72.5 L92 73 L92.5 80 L87 80 Z" fill="#3a3d42"/>
<path d="M2 67 L9 64.5 L9 67 L3 70 Z" fill="#3c3f45"/>
<path d="M2 72 L6 71 L6 78 L3 79 Z" fill="#8a3a3c"/>
<path d="M44 70 L66 70 L66 82 L44 82 Z" fill="#c4c8cf" opacity=".7"/>
<circle cx="15.5" cy="79" r="8" fill="#2c2d31"/><circle cx="15.5" cy="79" r="5" fill="#74757a"/><circle cx="15.5" cy="79" r="1.6" fill="#333"/>
<circle cx="74" cy="79" r="8" fill="#2c2d31"/><circle cx="74" cy="79" r="5" fill="#74757a"/><circle cx="74" cy="79" r="1.6" fill="#333"/>
</g></svg><!--/CAR4--></div></div>
<div class="td" style="left:529px;width:118px">车牌号5</div>
<div class="td" style="left:647px;width:119px">汽车品牌5</div>
<div class="td" style="left:766px;width:118px">手动挡</div>
<div class="td" style="left:884px;width:119px">车辆座位5</div>
<div class="td" style="left:1003px;width:119px">已预约</div>
<div class="td" style="left:1122px;width:119px">停放位置5</div>
<div class="td" style="left:1241px;width:118px">5</div>
<div class="td" style="left:1359px;width:284px"><div class="b1"><svg width="13" height="10" viewBox="0 0 13 10" fill="none" stroke="#fff" stroke-width="1.3"><path d="M1 5.2 L4.6 8.8 L12 1.2"/></svg>查看</div><div class="b2"><svg width="14" height="13" viewBox="0 0 14 13" fill="none" stroke="#fff" stroke-width="1.3"><path d="M7 12 C3 9 1 6.8 1 4.3 C1 2.3 2.5 1 4.1 1 C5.3 1 6.4 1.7 7 2.8 C7.6 1.7 8.7 1 9.9 1 C11.5 1 13 2.3 13 4.3 C13 6.8 11 9 7 12 Z"/></svg>车辆预约</div></div>
</div>
<div class="tr" style="top:521.0px">
<div class="td" style="left:0px;width:48px"><i class="cb"></i></div>
<div class="td" style="left:48px;width:47px">5</div>
<div class="td" style="left:95px;width:125px">车辆编号4</div>
<div class="td" style="left:220px;width:119px">车辆名称4</div>
<div class="td" style="left:339px;width:190px"><div class="pic"><!--CAR5--><svg width="95" height="95" viewBox="0 0 95 95"><defs><filter id="c5_cb" x="-10%" y="-10%" width="120%" height="120%"><feGaussianBlur stdDeviation="0.7"/></filter><filter id="c5_cb3" x="-20%" y="-20%" width="140%" height="140%"><feGaussianBlur stdDeviation="2.5"/></filter></defs>
<rect width="95" height="95" fill="#8b8b91"/>
<g filter="url(#c5_cb)">
<rect width="95" height="28" fill="#e6e4da"/>
<rect x="0" y="0" width="18" height="22" fill="#c9c9c5"/>
<rect x="1" y="1" width="4" height="5" fill="#55585a"/><rect x="6" y="12" width="10" height="4" fill="#6a6d6e"/><rect x="2" y="8" width="14" height="2" fill="#eeeeea"/>
<rect x="14" y="0" width="3.5" height="24" fill="#3a3832"/>
<rect x="20" y="3" width="16" height="2.5" fill="#a9aba7"/><rect x="22" y="9" width="5" height="5" fill="#70736f"/><rect x="31" y="9" width="5" height="5" fill="#80837f"/><rect x="20" y="16" width="26" height="2" fill="#b9bbb5"/>
<rect x="38" y="4" width="9" height="7" fill="#6f8660"/>
<rect x="52" y="1" width="17" height="3" fill="#b3b3a9"/><rect x="53" y="6" width="14" height="3.5" fill="#c7a544"/><rect x="53" y="10" width="14" height="3" fill="#6f8a58"/><rect x="52" y="15" width="18" height="2" fill="#c5c5bb"/>
<rect x="74" y="0" width="21" height="20" fill="#d9d9d7"/><rect x="76" y="3" width="19" height="3" fill="#9a9c9c"/><rect x="76" y="10" width="19" height="3" fill="#a4a6a6"/><rect x="76" y="16" width="19" height="2.5" fill="#b0b2b2"/>
<rect x="44" y="17" width="40" height="6" fill="#56784e"/>
<rect x="82" y="20" width="13" height="10" fill="#5a5a52"/>
<rect x="0" y="22" width="21" height="20" fill="#3b6957"/>
<rect x="0" y="21" width="21" height="3" fill="#6f8a6a"/>
<rect x="20" y="22" width="5" height="18" fill="#dfe5e3"/>
<ellipse cx="31" cy="27" rx="7" ry="7" fill="#587e50"/>
<path d="M0 41 L10 40 L12 45 L0 48 Z" fill="#d6aaa2"/>
<path d="M0 47 L20 42 L95 34 L95 95 L0 95 Z" fill="#88888e"/>
<path d="M0 72 L20 66 L40 84 L30 95 L0 95 Z" fill="#96969b"/>
<path d="M0 74 L6 72.5 L6 74 L0 75.8 Z" fill="#d6d6d8"/>
<path d="M38 95 L95 59 L95 75 L70 95 Z" fill="#cfcbc2"/>
<path d="M38 95 L95 59 L95 62 L44 95 Z" fill="#b5b1a8"/>
<path d="M71 95 L95 76 L95 95 Z" fill="#5f9448"/>
<path d="M87 30 L95 29 L95 52 L88 50 Z" fill="#e9ebf1"/><rect x="89" y="36" width="6" height="5" fill="#5a7ab4"/>
<path d="M20 84 L44 88 L60 80 L80 62 L90 58 L90 64 L62 86 L44 94 L22 88 Z" fill="#5b5b60" opacity=".8"/>
<path d="M7 50 L11 43 L30 37 L38 25 L40 22 L85 22 L87 30 L89 56 L84 62 L60 70 L56 84 L42 86 L36 76 L22 73 L9 66 Z" fill="#161b29"/>
<path d="M38 22 L85 22 L85.5 25 L37 26 Z" fill="#1d2740"/><path d="M62 22.5 L84 22.5 L84 25 L62 25.5 Z" fill="#3d5d8e"/>
<path d="M31 38 L40 27 L63 27 L60 40 L44 41 Z" fill="#97a1b2"/>
<path d="M44 28 L52 28 L50 39 L40 39 Z" fill="#6c7688" opacity=".8"/>
<path d="M65 27 L84 26.5 L86 41 L63 42.5 Z" fill="#252a3a"/><rect x="72" y="27" width="2" height="15" fill="#141826"/>
<path d="M11 44 L30 38.5 L58 40.5 L40 48 L13 50 Z" fill="#222a40"/>
<path d="M18 42 L30 39.5 L38 41 L26 44 Z" fill="#3f4a66" opacity=".8"/>
<path d="M9 47 L34 52 L34 70 L10 62 Z" fill="#0f1320"/>
<rect x="15" y="50" width="4" height="4" fill="#8a2a30"/>
<circle cx="30" cy="56.5" r="3" fill="#aeb4be"/>
<path d="M9 57 L17.5 59 L17.5 63.5 L9 61.5 Z" fill="#dcdde0"/>
<path d="M23 70 L33 72.5 L32 76 L23 73.5 Z" fill="#a4a7ad"/>
<path d="M36 63 L44 54 L48.5 56 L41 77 L36 77 Z" fill="#a1a5ad"/>
<path d="M80 46 L86 44 L85 56 L80 57.5 Z" fill="#a1a5ad"/>
<path d="M56 66 L79 54 L80 57 L58 70 Z" fill="#0c0e16"/>
<ellipse cx="51" cy="74.5" rx="9.5" ry="13.5" fill="#0c0d12"/><ellipse cx="50" cy="74.5" rx="4" ry="7" fill="#1c1e26"/>
<ellipse cx="84.5" cy="58.5" rx="5" ry="10" fill="#0c0d12"/>
</g></svg><!--/CAR5--></div></div>
<div class="td" style="left:529px;width:118px">车牌号4</div>
<div class="td" style="left:647px;width:119px">汽车品牌4</div>
<div class="td" style="left:766px;width:118px">手动挡</div>
<div class="td" style="left:884px;width:119px">车辆座位4</div>
<div class="td" style="left:1003px;width:119px">已预约</div>
<div class="td" style="left:1122px;width:119px">停放位置4</div>
<div class="td" style="left:1241px;width:118px">4</div>
<div class="td" style="left:1359px;width:284px"><div class="b1"><svg width="13" height="10" viewBox="0 0 13 10" fill="none" stroke="#fff" stroke-width="1.3"><path d="M1 5.2 L4.6 8.8 L12 1.2"/></svg>查看</div><div class="b2"><svg width="14" height="13" viewBox="0 0 14 13" fill="none" stroke="#fff" stroke-width="1.3"><path d="M7 12 C3 9 1 6.8 1 4.3 C1 2.3 2.5 1 4.1 1 C5.3 1 6.4 1.7 7 2.8 C7.6 1.7 8.7 1 9.9 1 C11.5 1 13 2.3 13 4.3 C13 6.8 11 9 7 12 Z"/></svg>车辆预约</div></div>
</div>
<div class="tr" style="top:634.1px">
<div class="td" style="left:0px;width:48px"><i class="cb"></i></div>
<div class="td" style="left:48px;width:47px">6</div>
<div class="td" style="left:95px;width:125px">车辆编号3</div>
<div class="td" style="left:220px;width:119px">车辆名称3</div>
<div class="td" style="left:339px;width:190px"><div class="pic"><!--CAR6--><svg width="95" height="95" viewBox="0 0 95 95"><defs><filter id="c6_cb" x="-10%" y="-10%" width="120%" height="120%"><feGaussianBlur stdDeviation="0.7"/></filter><filter id="c6_cb3" x="-20%" y="-20%" width="140%" height="140%"><feGaussianBlur stdDeviation="2.5"/></filter>
<linearGradient id="c6_c6s" x1="0" y1="0" x2="0" y2="1"><stop offset="0" stop-color="#4a657d"/><stop offset=".22" stop-color="#6f8ca2"/><stop offset=".38" stop-color="#b4c8d6"/><stop offset=".6" stop-color="#dbe5eb"/><stop offset="1" stop-color="#e6ebee"/></linearGradient>
<linearGradient id="c6_c6g" x1="0" y1="0" x2="0" y2="1"><stop offset="0" stop-color="#c9cbcd"/><stop offset=".4" stop-color="#b9bbbd"/><stop offset="1" stop-color="#cfd1d3"/></linearGradient></defs>
<rect width="95" height="60" fill="url(#c6_c6s)"/>
<g filter="url(#c6_cb3)"><ellipse cx="28" cy="34" rx="32" ry="9" fill="#eef2f4" opacity=".85"/><ellipse cx="78" cy="24" rx="22" ry="6" fill="#a9c3d6" opacity=".7"/><ellipse cx="48" cy="5" rx="52" ry="7" fill="#405a72" opacity=".75"/><ellipse cx="84" cy="40" rx="14" ry="6" fill="#e9eef0" opacity=".7"/></g>
<g filter="url(#c6_cb)">
<rect y="59" width="95" height="36" fill="url(#c6_c6g)"/>
<rect y="48" width="17" height="12" fill="#a9b1b5"/><rect x="2" y="45" width="2.5" height="7" fill="#8f999f"/><rect x="5" y="50" width="10" height="3" fill="#99a2a8"/>
<rect x="86" y="52" width="9" height="8" fill="#b2b6ae"/>
<rect x="91" y="36" width="4" height="14" fill="#b9bec2"/>
<rect y="58.5" width="95" height="2" fill="#8d969b"/>
<rect y="76" width="95" height="2.5" fill="#aeb0b2" opacity=".7"/><rect y="84" width="95" height="3" fill="#b3b5b7" opacity=".7"/>
<ellipse cx="58" cy="70.5" rx="37" ry="6" fill="#44464a"/>
<path d="M18 52 L20 47 L36 44 L46 36.5 L63 35.5 L76 36.5 L84 43 L88 47 L89 58 L84 63 L60 67 L36 67 L20 62 Z" fill="#b9741f"/>
<path d="M36.5 43.5 L46.5 37 L63 36.5 L60 44 Z" fill="#1f1d1c"/>
<path d="M64.5 37.5 L77.5 38 L83 44 L63.5 45 Z" fill="#4a3a28"/><rect x="70.5" y="37.5" width="1.6" height="7.5" fill="#8a5a1c"/>
<path d="M20 47.5 L36 44.5 L60 45.5 L48 49 L20 50.5 Z" fill="#ca8a2e"/>
<path d="M52 50 L86 48 L87 52 L53 55 Z" fill="#cf8e30" opacity=".7"/>
<path d="M18.5 51 L48 50 L50 66 L36 67 L20 62 Z" fill="#36312b"/>
<path d="M38 49.5 L48 49 L47 52 L39 52.5 Z" fill="#e9e3d2"/><path d="M19 50 L24 49.8 L24 52 L19.5 52.5 Z" fill="#d9d3c2"/>
<path d="M20 60 L38 64.5 L38 67.5 L21.5 64 Z" fill="#b9bdc1"/>
<rect x="40" y="58" width="5" height="3.5" fill="#cfd2d4"/>
<path d="M52 62 L84 58 L84 62.5 L60 67 L52 66.5 Z" fill="#3b3630"/>
<ellipse cx="56" cy="66" rx="6" ry="8.5" fill="#25252a"/><ellipse cx="56.3" cy="66" rx="3.6" ry="5.6" fill="#9ea0a6"/><ellipse cx="56.3" cy="66" rx="1.2" ry="1.8" fill="#444"/>
<ellipse cx="82" cy="61" rx="3.8" ry="7" fill="#25252a"/><ellipse cx="82.2" cy="61" rx="2" ry="4.2" fill="#9ea0a6"/>
</g></svg><!--/CAR6--></div></div>
<div class="td" style="left:529px;width:118px">车牌号3</div>
<div class="td" style="left:647px;width:119px">汽车品牌3</div>
<div class="td" style="left:766px;width:118px">手动挡</div>
<div class="td" style="left:884px;width:119px">车辆座位3</div>
<div class="td" style="left:1003px;width:119px">已预约</div>
<div class="td" style="left:1122px;width:119px">停放位置3</div>
<div class="td" style="left:1241px;width:118px">3</div>
<div class="td" style="left:1359px;width:284px"><div class="b1"><svg width="13" height="10" viewBox="0 0 13 10" fill="none" stroke="#fff" stroke-width="1.3"><path d="M1 5.2 L4.6 8.8 L12 1.2"/></svg>查看</div><div class="b2"><svg width="14" height="13" viewBox="0 0 14 13" fill="none" stroke="#fff" stroke-width="1.3"><path d="M7 12 C3 9 1 6.8 1 4.3 C1 2.3 2.5 1 4.1 1 C5.3 1 6.4 1.7 7 2.8 C7.6 1.7 8.7 1 9.9 1 C11.5 1 13 2.3 13 4.3 C13 6.8 11 9 7 12 Z"/></svg>车辆预约</div></div>
</div>
</div>
<!--TB1-->
<div id="wm">成都鼠狂</div>
<div id="drop"><div style="top:14px">首页</div><div style="top:47px">个人资料</div><div style="top:80px">退出登录</div></div>
<div id="blk"></div>
<div id="sb"><i></i><svg width="17" height="17" viewBox="0 0 17 17" style="position:absolute;left:0;top:-2px"><path d="M5 10 L8.5 6 L12 10 Z" fill="#a3a3a3"/></svg><svg width="17" height="17" viewBox="0 0 17 17" style="position:absolute;left:0;top:922px"><path d="M5 6 L8.5 10 L12 6 Z" fill="#505050"/></svg></div>
<svg id="cursor" width="14" height="21" viewBox="0 0 14 21" style="position:absolute;left:1807.5px;top:23.3px"><path d="M1 1 L1 16.5 L4.6 13.2 L7.2 19.4 L9.8 18.3 L7.2 12.3 L12.2 12.3 Z" fill="#fff" stroke="#111" stroke-width="1.1" stroke-linejoin="round"/></svg>
<svg width="8" height="4" viewBox="0 0 8 4" style="position:absolute;left:1830px;top:51.5px"><path d="M0 4 L4 0 L8 4 Z" fill="#e4f6fb" opacity=".8"/></svg>
</body>
</html>
